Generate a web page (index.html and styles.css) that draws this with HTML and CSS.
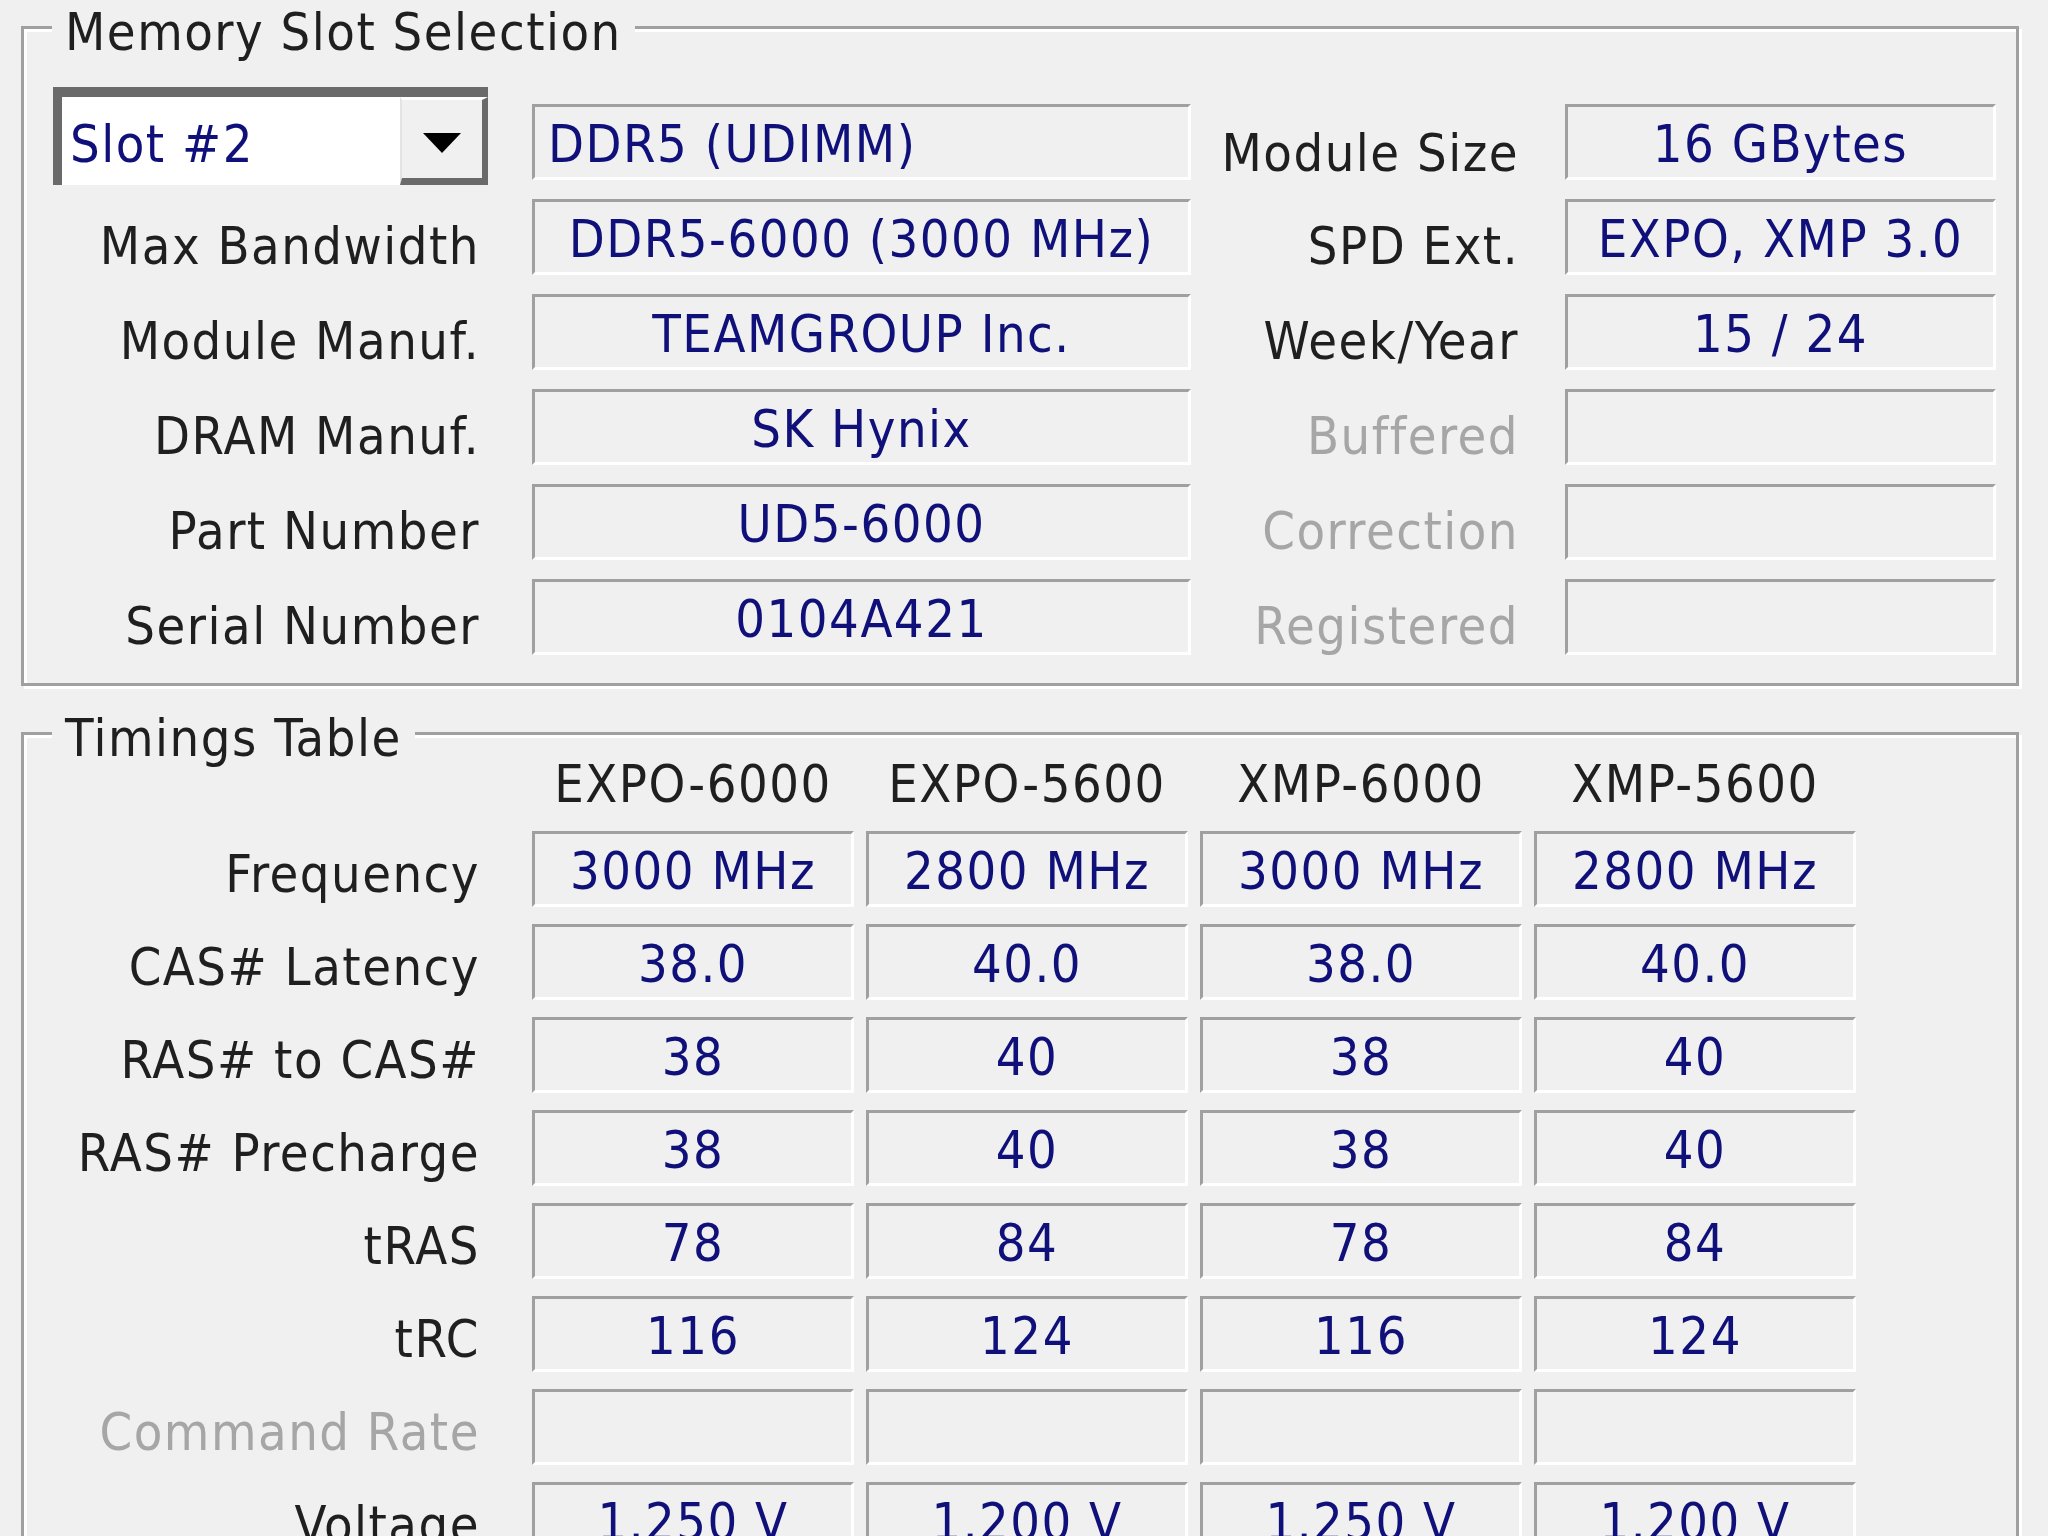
FILE: index.html
```html
<!DOCTYPE html>
<html lang="en">
<head>
<meta charset="UTF-8">
<meta name="viewport" content="width=device-width, initial-scale=1.0">
<title>SPD</title>
<link rel="stylesheet" href="styles.css">
</head>
<body>

<div class="spd">
    <fieldset class="group slots">
        <legend>Memory Slot Selection</legend>
        <div class="slot-grid">
            <div class="combo">
                <span class="combo-value">Slot #2</span>
                <span class="combo-btn">
                    <svg width="38" height="20" viewBox="0 0 38 20"><polygon points="0,0 38,0 19,20" fill="#000"/></svg>
                </span>
            </div>
            <div class="field left">DDR5 (UDIMM)</div>
            <div class="label size">Module Size</div>
            <div class="field">16 GBytes</div>

            <div class="label">Max Bandwidth</div>
            <div class="field">DDR5-6000 (3000 MHz)</div>
            <div class="label">SPD Ext.</div>
            <div class="field">EXPO, XMP 3.0</div>

            <div class="label">Module Manuf.</div>
            <div class="field">TEAMGROUP Inc.</div>
            <div class="label">Week/Year</div>
            <div class="field">15 / 24</div>

            <div class="label">DRAM Manuf.</div>
            <div class="field">SK Hynix</div>
            <div class="label off">Buffered</div>
            <div class="field"></div>

            <div class="label">Part Number</div>
            <div class="field">UD5-6000</div>
            <div class="label off">Correction</div>
            <div class="field"></div>

            <div class="label">Serial Number</div>
            <div class="field">0104A421</div>
            <div class="label off">Registered</div>
            <div class="field"></div>
        </div>
    </fieldset>

    <fieldset class="group timings">
        <legend>Timings Table</legend>
        <div class="timing-grid">
            <div class="head"></div>
            <div class="head">EXPO-6000</div>
            <div class="head">EXPO-5600</div>
            <div class="head">XMP-6000</div>
            <div class="head">XMP-5600</div>

            <div class="label">Frequency</div>
            <div class="field">3000 MHz</div>
            <div class="field">2800 MHz</div>
            <div class="field">3000 MHz</div>
            <div class="field">2800 MHz</div>

            <div class="label">CAS# Latency</div>
            <div class="field">38.0</div>
            <div class="field">40.0</div>
            <div class="field">38.0</div>
            <div class="field">40.0</div>

            <div class="label">RAS# to CAS#</div>
            <div class="field">38</div>
            <div class="field">40</div>
            <div class="field">38</div>
            <div class="field">40</div>

            <div class="label">RAS# Precharge</div>
            <div class="field">38</div>
            <div class="field">40</div>
            <div class="field">38</div>
            <div class="field">40</div>

            <div class="label">tRAS</div>
            <div class="field">78</div>
            <div class="field">84</div>
            <div class="field">78</div>
            <div class="field">84</div>

            <div class="label">tRC</div>
            <div class="field">116</div>
            <div class="field">124</div>
            <div class="field">116</div>
            <div class="field">124</div>

            <div class="label off">Command Rate</div>
            <div class="field"></div>
            <div class="field"></div>
            <div class="field"></div>
            <div class="field"></div>

            <div class="label">Voltage</div>
            <div class="field">1.250 V</div>
            <div class="field">1.200 V</div>
            <div class="field">1.250 V</div>
            <div class="field">1.200 V</div>
        </div>
    </fieldset>
</div>

</body>
</html>
```

FILE: styles.css
```css
* {
    box-sizing: border-box;
    margin: 0;
    padding: 0;
}

html, body {
    height: 100%;
}

body {
    background: #f0f0f0;
    font-family: "DejaVu Sans Condensed", "Liberation Sans", sans-serif;
    font-size: 52px;
    letter-spacing: 1.5px;
    color: #1f1f1f;
    overflow: hidden;
}

.spd {
    width: 2019px;
    padding-left: 21px;
}

/* etched group box */
.group {
    border: 3px solid #a0a0a0;
    box-shadow: 3px 3px 0 #fff, inset 3px 3px 0 #fff;
    min-width: 0;
}

.group legend {
    margin-left: 28px;
    padding: 10px 13px 0;
    line-height: 44px;
    background: #f0f0f0;
    white-space: nowrap;
}

.timings {
    margin-top: 20px;
    height: 900px;
}

.label {
    text-align: right;
    white-space: nowrap;
    padding-top: 18px;
    line-height: 58px;
}

.label.off {
    color: #a6a6a6;
}

.field {
    height: 76px;
    padding-top: 4px;
    border-top: 3px solid #a0a0a0;
    border-left: 3px solid #a0a0a0;
    border-right: 3px solid #fff;
    border-bottom: 3px solid #fff;
    line-height: 66px;
    text-align: center;
    color: #10107a;
    white-space: nowrap;
    overflow: hidden;
}

.field.left {
    text-align: left;
    padding-left: 13px;
}

/* memory slot block */
.slot-grid {
    display: grid;
    grid-template-columns: 479px 659px 374px 431px;
    grid-auto-rows: 76px;
    row-gap: 19px;
    padding: 50px 0 28px 29px;
}

.slot-grid .label {
    padding-right: 52px;
}

.slot-grid .label:nth-child(4n+3) {
    padding-right: 46px;
}

.slot-grid .label.size {
    padding-top: 22px;
    line-height: 54px;
}

.combo {
    display: flex;
    width: 435px;
    height: 98px;
    margin: -17px 0 -5px 0;
    border-top: 10px solid #6a6a6a;
    border-left: 9px solid #6a6a6a;
    background: #fff;
}

.combo-value {
    flex: 1;
    padding: 6px 0 0 8px;
    line-height: 82px;
    color: #10107a;
}

.combo-btn {
    display: flex;
    align-items: center;
    justify-content: center;
    width: 88px;
    padding-top: 8px;
    background: #f0f0f0;
    border-top: 3px solid #fff;
    border-left: 2px solid #e3e3e3;
    border-right: 6px solid #6a6a6a;
    border-bottom: 7px solid #6a6a6a;
}

/* timings block */
.timing-grid {
    display: grid;
    grid-template-columns: 467px repeat(4, 322px);
    grid-template-rows: 54px;
    grid-auto-rows: 76px;
    column-gap: 12px;
    row-gap: 17px;
    padding-left: 29px;
}

.timing-grid .head {
    padding-top: 2px;
    line-height: 44px;
    text-align: center;
    white-space: nowrap;
}

.timing-grid .label {
    padding-right: 40px;
    padding-top: 11px;
    line-height: 65px;
}
```
